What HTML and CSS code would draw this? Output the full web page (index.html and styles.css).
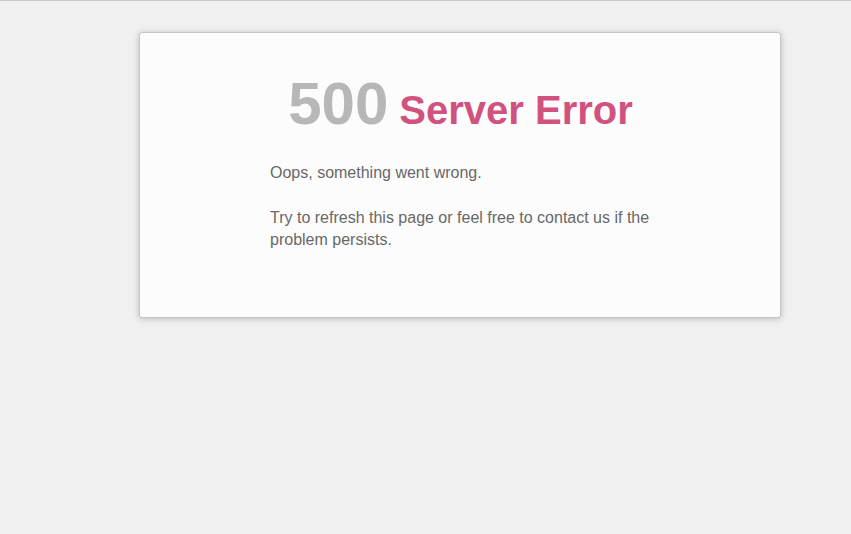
FILE: index.html
```html
<!DOCTYPE html>
<html lang="en">
<head>
<meta charset="utf-8">
<title>500 Server Error</title>
<link rel="stylesheet" href="styles.css">
</head>
<body>
<div class="page">
  <div class="card">
    <div class="content">
      <h1 class="title"><span class="code">500</span><span class="label"> Server Error</span></h1>
      <p class="msg">Oops, something went wrong.</p>
      <p class="msg">Try to refresh this page or feel free to contact us if the problem persists.</p>
    </div>
  </div>
</div>
</body>
</html>
```

FILE: styles.css
```css
html, body {
  margin: 0;
  padding: 0;
  height: 100%;
}
body {
  background: #f0f0f0;
  border-top: 1px solid #c9c9c9;
  box-sizing: border-box;
  font-family: "Liberation Sans", Arial, sans-serif;
}
.page {
  padding: 31px 0 0 139px;
}
.card {
  width: 640px;
  box-sizing: content-box;
  background: #fcfcfc;
  border: 1px solid #c6c6c6;
  border-radius: 3px;
  box-shadow: 0 1px 6px rgba(0, 0, 0, 0.22);
  padding: 41px 0 66px;
}
.content {
  width: 381px;
  margin: 0 auto;
  padding-left: 1px;
}
.title {
  margin: 0 0 28px;
  font-size: 60px;
  line-height: 1;
  font-weight: bold;
  text-align: center;
  white-space: nowrap;
}
.code {
  color: #b7b7b7;
}
.label {
  color: #d1527f;
  font-size: 40px;
}
.msg {
  margin: 0 0 23px;
  font-size: 16px;
  line-height: 22px;
  color: #686868;
}
.msg:last-child {
  margin-bottom: 0;
}
```
